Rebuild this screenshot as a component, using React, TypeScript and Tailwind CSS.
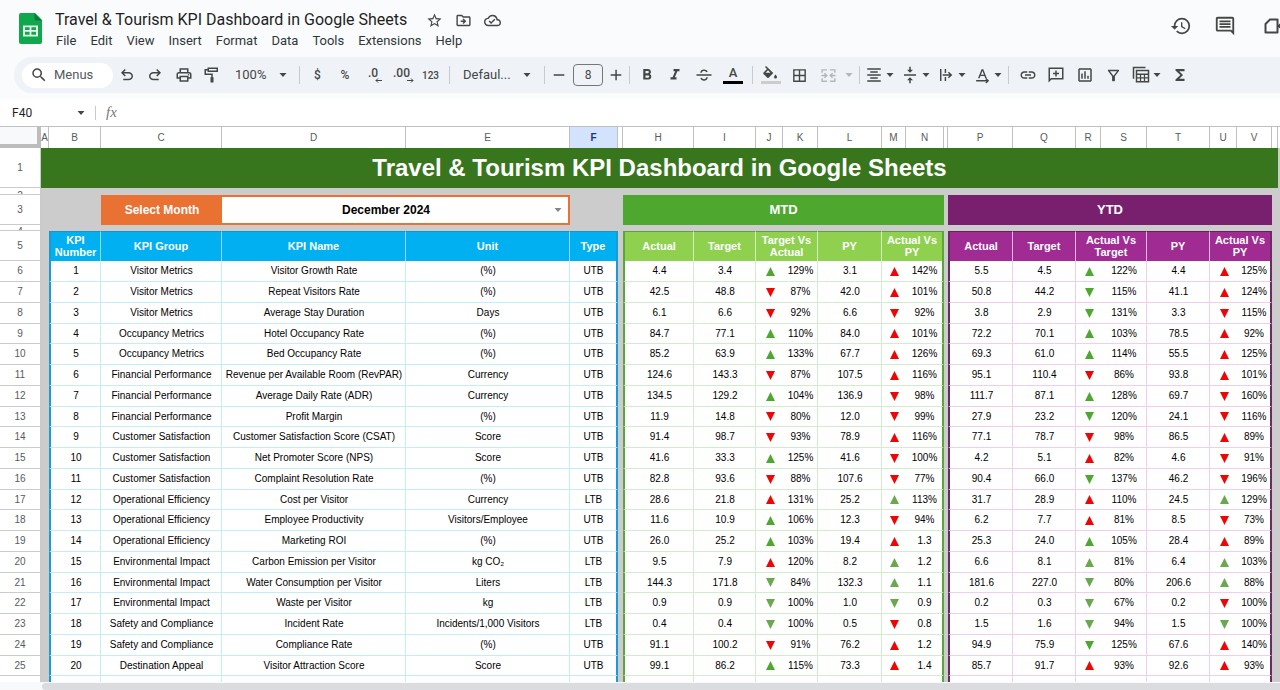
import type { ReactNode } from 'react';
import clsx from 'clsx';
import {
  MdBorderAll,
  MdFormatAlignCenter,
  MdFormatBold,
  MdFormatItalic,
  MdFunctions,
  MdHistory,
  MdLink,
  MdOutlineCloudDone,
  MdOutlineComment,
  MdOutlineDriveFileMove,
  MdOutlineFilterAlt,
  MdOutlineInsertChart,
  MdOutlinePrint,
  MdSearch,
  MdStarBorder,
  MdVerticalAlignCenter,
} from 'react-icons/md';

type Mark = 'up' | 'down' | 'upRed' | 'downRed';
type Period = [string, string, Mark, string, string, Mark, string];

interface Kpi {
  group: string;
  name: string;
  unit: string;
  type: 'UTB' | 'LTB';
  mtd: Period;
  ytd: Period;
}

const kpis: Kpi[] = [
  { group: 'Visitor Metrics', name: 'Visitor Growth Rate', unit: '(%)', type: 'UTB', mtd: ['4.4', '3.4', 'up', '129%', '3.1', 'upRed', '142%'], ytd: ['5.5', '4.5', 'up', '122%', '4.4', 'upRed', '125%'] },
  { group: 'Visitor Metrics', name: 'Repeat Visitors Rate', unit: '(%)', type: 'UTB', mtd: ['42.5', '48.8', 'downRed', '87%', '42.0', 'upRed', '101%'], ytd: ['50.8', '44.2', 'down', '115%', '41.1', 'upRed', '124%'] },
  { group: 'Visitor Metrics', name: 'Average Stay Duration', unit: 'Days', type: 'UTB', mtd: ['6.1', '6.6', 'downRed', '92%', '6.6', 'downRed', '92%'], ytd: ['3.8', '2.9', 'down', '131%', '3.3', 'downRed', '115%'] },
  { group: 'Occupancy Metrics', name: 'Hotel Occupancy Rate', unit: '(%)', type: 'UTB', mtd: ['84.7', '77.1', 'up', '110%', '84.0', 'upRed', '101%'], ytd: ['72.2', '70.1', 'up', '103%', '78.5', 'upRed', '92%'] },
  { group: 'Occupancy Metrics', name: 'Bed Occupancy Rate', unit: '(%)', type: 'UTB', mtd: ['85.2', '63.9', 'up', '133%', '67.7', 'upRed', '126%'], ytd: ['69.3', '61.0', 'up', '114%', '55.5', 'upRed', '125%'] },
  { group: 'Financial Performance', name: 'Revenue per Available Room (RevPAR)', unit: 'Currency', type: 'UTB', mtd: ['124.6', '143.3', 'downRed', '87%', '107.5', 'upRed', '116%'], ytd: ['95.1', '110.4', 'downRed', '86%', '93.8', 'upRed', '101%'] },
  { group: 'Financial Performance', name: 'Average Daily Rate (ADR)', unit: 'Currency', type: 'UTB', mtd: ['134.5', '129.2', 'up', '104%', '136.9', 'downRed', '98%'], ytd: ['111.7', '87.1', 'up', '128%', '69.7', 'downRed', '160%'] },
  { group: 'Financial Performance', name: 'Profit Margin', unit: '(%)', type: 'UTB', mtd: ['11.9', '14.8', 'downRed', '80%', '12.0', 'downRed', '99%'], ytd: ['27.9', '23.2', 'down', '120%', '24.1', 'downRed', '116%'] },
  { group: 'Customer Satisfaction', name: 'Customer Satisfaction Score (CSAT)', unit: 'Score', type: 'UTB', mtd: ['91.4', '98.7', 'downRed', '93%', '78.9', 'upRed', '116%'], ytd: ['77.1', '78.7', 'downRed', '98%', '86.5', 'upRed', '89%'] },
  { group: 'Customer Satisfaction', name: 'Net Promoter Score (NPS)', unit: 'Score', type: 'UTB', mtd: ['41.6', '33.3', 'up', '125%', '41.6', 'downRed', '100%'], ytd: ['4.2', '5.1', 'upRed', '82%', '4.6', 'downRed', '91%'] },
  { group: 'Customer Satisfaction', name: 'Complaint Resolution Rate', unit: '(%)', type: 'UTB', mtd: ['82.8', '93.6', 'downRed', '88%', '107.6', 'downRed', '77%'], ytd: ['90.4', '66.0', 'down', '137%', '46.2', 'downRed', '196%'] },
  { group: 'Operational Efficiency', name: 'Cost per Visitor', unit: 'Currency', type: 'LTB', mtd: ['28.6', '21.8', 'upRed', '131%', '25.2', 'up', '113%'], ytd: ['31.7', '28.9', 'upRed', '110%', '24.5', 'up', '129%'] },
  { group: 'Operational Efficiency', name: 'Employee Productivity', unit: 'Visitors/Employee', type: 'UTB', mtd: ['11.6', '10.9', 'up', '106%', '12.3', 'downRed', '94%'], ytd: ['6.2', '7.7', 'upRed', '81%', '8.5', 'downRed', '73%'] },
  { group: 'Operational Efficiency', name: 'Marketing ROI', unit: '(%)', type: 'UTB', mtd: ['26.0', '25.2', 'up', '103%', '19.4', 'upRed', '1.3'], ytd: ['25.3', '24.0', 'up', '105%', '28.4', 'upRed', '89%'] },
  { group: 'Environmental Impact', name: 'Carbon Emission per Visitor', unit: 'kg CO₂', type: 'LTB', mtd: ['9.5', '7.9', 'upRed', '120%', '8.2', 'up', '1.2'], ytd: ['6.6', '8.1', 'up', '81%', '6.4', 'up', '103%'] },
  { group: 'Environmental Impact', name: 'Water Consumption per Visitor', unit: 'Liters', type: 'LTB', mtd: ['144.3', '171.8', 'down', '84%', '132.3', 'up', '1.1'], ytd: ['181.6', '227.0', 'down', '80%', '206.6', 'up', '88%'] },
  { group: 'Environmental Impact', name: 'Waste per Visitor', unit: 'kg', type: 'LTB', mtd: ['0.9', '0.9', 'down', '100%', '1.0', 'down', '0.9'], ytd: ['0.2', '0.3', 'down', '67%', '0.2', 'downRed', '100%'] },
  { group: 'Safety and Compliance', name: 'Incident Rate', unit: 'Incidents/1,000 Visitors', type: 'LTB', mtd: ['0.4', '0.4', 'down', '100%', '0.5', 'downRed', '0.8'], ytd: ['1.5', '1.6', 'down', '94%', '1.5', 'down', '100%'] },
  { group: 'Safety and Compliance', name: 'Compliance Rate', unit: '(%)', type: 'UTB', mtd: ['91.1', '100.2', 'downRed', '91%', '76.2', 'upRed', '1.2'], ytd: ['94.9', '75.9', 'down', '125%', '67.6', 'upRed', '140%'] },
  { group: 'Destination Appeal', name: 'Visitor Attraction Score', unit: 'Score', type: 'UTB', mtd: ['99.1', '86.2', 'up', '115%', '73.3', 'upRed', '1.4'], ytd: ['85.7', '91.7', 'upRed', '93%', '92.6', 'upRed', '93%'] },
];

const columns = [
  { letter: 'A', width: 'w-2' },
  { letter: 'B', width: 'w-[52px]' },
  { letter: 'C', width: 'w-[121px]' },
  { letter: 'D', width: 'w-[184px]' },
  { letter: 'E', width: 'w-[164px]' },
  { letter: 'F', width: 'w-12' },
  { letter: '', width: 'w-[5px]' },
  { letter: 'H', width: 'w-[71px]' },
  { letter: 'I', width: 'w-[62px]' },
  { letter: 'J', width: 'w-[27px]' },
  { letter: 'K', width: 'w-[35px]' },
  { letter: 'L', width: 'w-16' },
  { letter: 'M', width: 'w-6' },
  { letter: 'N', width: 'w-[38px]' },
  { letter: '', width: 'w-1' },
  { letter: 'P', width: 'w-[65px]' },
  { letter: 'Q', width: 'w-[63px]' },
  { letter: 'R', width: 'w-[25px]' },
  { letter: 'S', width: 'w-[46px]' },
  { letter: 'T', width: 'w-[63px]' },
  { letter: 'U', width: 'w-[27px]' },
  { letter: 'V', width: 'w-[35px]' },
  { letter: '', width: 'w-1.5' },
];

const menus = ['File', 'Edit', 'View', 'Insert', 'Format', 'Data', 'Tools', 'Extensions', 'Help'];

const themes = {
  kpi: { head: 'bg-[#00b0f0] border-[#8fdcf8] border-t-[#1795c4]', cell: 'border-[#c4edf8]', left: 'border-l-2 border-l-[#1b9bd0]', right: 'border-r-2 border-r-[#1b9bd0]' },
  mtd: { head: 'bg-[#8fd14f] border-[#d5efbb] border-t-[#5fa044]', cell: 'border-[#d0eecb]', left: 'border-l-2 border-l-[#5aa53e]', right: 'border-r-2 border-r-[#5aa53e]' },
  ytd: { head: 'bg-[#a02b93] border-[#e3b6de] border-t-[#64205b]', cell: 'border-[#f1cdf0]', left: 'border-l-2 border-l-[#6b2c62]', right: 'border-r-2 border-r-[#6b2c62]' },
};

const SheetsLogo = () => (
  <svg viewBox="0 0 23 31" className="h-[31px] w-[23px] shrink-0" aria-hidden="true">
    <path d="M2 0h14l7 7v22a2 2 0 0 1-2 2H2a2 2 0 0 1-2-2V2a2 2 0 0 1 2-2z" fill="#0fa84c" />
    <path d="M15.500 0L23 7.500h-5.500a2 2 0 0 1-2-2z" fill="#0b7d38" />
    <path d="M4 12.500h15v11H4zM6 14.300v2.700h4.600v-2.700zM12.400 14.300v2.700H17v-2.700zM6 18.800v2.900h4.600v-2.900zM12.400 18.800v2.900H17v-2.900z" fill="#e6f7ec" fillRule="evenodd" />
  </svg>
);

const Svg = ({ size = 18, children }: { size?: number; children: ReactNode }) => (
  <svg viewBox="0 0 24 24" width={size} height={size} fill="currentColor" aria-hidden="true">
    {children}
  </svg>
);

const Caret = ({ className = 'text-[#444746]' }: { className?: string }) => (
  <svg viewBox="0 0 8 4" className={clsx('h-1 w-2 shrink-0', className)} fill="currentColor" aria-hidden="true">
    <path d="M0.500 0h7L4 4z" />
  </svg>
);

const Triangle = ({ mark, type }: { mark: Mark; type: Kpi['type'] }) => {
  const red = mark === 'upRed' || mark === 'downRed';
  const up = mark === 'up' || mark === 'upRed';
  const color = red ? 'text-[#f00505]' : type === 'UTB' ? 'text-[#4ea72e]' : 'text-[#6aa84f]';
  return (
    <svg viewBox="0 0 9 9" className={clsx('mx-auto block h-[9px] w-[9px]', color)} fill="currentColor" role="img" aria-label={up ? 'Up' : 'Down'}>
      <path d={up ? 'M4.500 0L9 9H0z' : 'M0 0h9L4.500 9z'} />
    </svg>
  );
};

interface ToolProps {
  label: string;
  width?: string;
  caret?: boolean;
  disabled?: boolean;
  children: ReactNode;
}

const Tool = ({ label, width = 'w-7', caret, disabled, children }: ToolProps) => (
  <button
    type="button"
    aria-label={label}
    disabled={disabled}
    className={clsx(
      'flex h-7 shrink-0 items-center justify-center rounded',
      caret ? 'w-8' : width,
      disabled ? 'text-[#b4b7ba]' : 'text-[#444746]',
    )}
  >
    {caret ? (
      <>
        <span className="flex w-5 justify-center">{children}</span>
        <span className="flex w-3 justify-center">
          <Caret className="text-current" />
        </span>
      </>
    ) : (
      children
    )}
  </button>
);

const Divider = () => <span className="mx-1 h-[18px] w-px shrink-0 bg-[#c7cbd0]" />;

const DecimalIcon = ({ text, back }: { text: string; back?: boolean }) => (
  <span className="flex flex-col text-[12px] leading-[10px] font-medium">
    {text}
    <svg viewBox="0 0 7 5" className="-mr-1 h-[5px] w-[7px] self-end" fill="none" stroke="currentColor" aria-hidden="true">
      <path d={back ? 'M7 2.500H1M3 .5l-2 2 2 2' : 'M0 2.500h6M4 .5l2 2-2 2'} />
    </svg>
  </span>
);

const Header = () => (
  <header className="flex items-start justify-between overflow-hidden pt-[9px] pl-[19px]">
    <div className="flex gap-3">
      <div className="pt-1">
        <SheetsLogo />
      </div>
      <div>
        <div className="flex h-[22px] items-center text-[#444746]">
          <h1 className="pl-px text-[16px] leading-[22px] whitespace-nowrap text-[#1f1f1f]">
            Travel &amp; Tourism KPI Dashboard in Google Sheets
          </h1>
          <div className="ml-[19px] flex gap-3">
            <button type="button" aria-label="Star"><MdStarBorder size={17} /></button>
            <button type="button" aria-label="Move"><MdOutlineDriveFileMove size={17} /></button>
            <button type="button" aria-label="Document status"><MdOutlineCloudDone size={17} /></button>
          </div>
        </div>
        <nav className="flex h-5 items-center gap-3.5 pl-0.5 text-[13px] leading-5 text-[#333638]">
          {menus.map((menu) => (
            <button key={menu} type="button">{menu}</button>
          ))}
        </nav>
      </div>
    </div>
    <div className="-mr-1 flex h-[34px] items-center gap-[22px] text-[#444746]">
      <button type="button" aria-label="Version history"><MdHistory size={22} /></button>
      <button type="button" aria-label="Comments"><MdOutlineComment size={22} /></button>
      <button type="button" aria-label="Join a call" className="ml-1.5">
        <svg viewBox="0 0 20 16" className="h-4 w-5" fill="none" stroke="currentColor" strokeWidth="2" aria-hidden="true">
          <path d="M6 1.500h7.500v13H1.500V6z" strokeLinejoin="round" />
          <path d="M13.500 7.500L19 3v10l-5.500-4.500z" fill="currentColor" strokeWidth="0" />
        </svg>
      </button>
    </div>
  </header>
);

const Toolbar = () => (
  <div role="toolbar" aria-label="Main toolbar" className="mt-[6px] ml-3.5 flex h-9 items-center overflow-hidden rounded-l-full bg-[#eff3f8] pl-2 text-[13px] text-[#444746]">
    <label className="flex h-[25px] w-[91px] shrink-0 items-center rounded-full bg-white pl-2">
      <MdSearch size={18} className="shrink-0" />
      <input type="text" aria-label="Search the menus" placeholder="Menus" className="ml-1.5 w-14 bg-transparent outline-none placeholder:text-[#54585b]" />
    </label>
    <Tool label="Undo">
      <Svg><path d="M7 19v-2h7.100q1.575 0 2.738-1T18 13.500 16.838 11 14.100 10H7.800l2.600 2.600L9 14 4 9l5-5 1.400 1.400L7.800 8h6.300q2.425 0 4.163 1.575T20 13.500t-1.737 3.925T14.100 19z" /></Svg>
    </Tool>
    <Tool label="Redo">
      <Svg><path d="M17 19v-2H9.900q-1.575 0-2.738-1T6 13.500 7.162 11 9.900 10h6.300l-2.600 2.600L15 14l5-5-5-5-1.400 1.400L16.200 8H9.900Q7.475 8 5.737 9.575T4 13.500t1.737 3.925T9.900 19z" /></Svg>
    </Tool>
    <Tool label="Print" width="w-[29px]"><MdOutlinePrint size={18} /></Tool>
    <Tool label="Paint format">
      <Svg><path d="M6 2h14v6H6V6H4v4h9v5h1v7h-4v-7h1v-3H2V4h4zm2 2v2h10V4z" fillRule="evenodd" /></Svg>
    </Tool>
    <span className="relative flex w-[69px] shrink-0 items-center">
      <select aria-label="Zoom" className="w-full appearance-none pl-[9px] outline-none">
        <option>100%</option>
      </select>
      <Caret className="pointer-events-none absolute right-2" />
    </span>
    <Divider />
    <Tool label="Format as currency" width="w-[27px]"><span className="text-[12px] font-medium">$</span></Tool>
    <Tool label="Format as percent"><span className="text-[12px] font-medium">%</span></Tool>
    <Tool label="Decrease decimal places"><DecimalIcon text=".0" back /></Tool>
    <Tool label="Increase decimal places" width="w-[29px]"><DecimalIcon text=".00" /></Tool>
    <Tool label="More formats" width="w-[29px]"><span className="text-[10px] font-medium">123</span></Tool>
    <Divider />
    <span className="relative flex w-[86px] shrink-0 items-center">
      <select aria-label="Font" className="w-full appearance-none pl-[9px] outline-none">
        <option>Defaul...</option>
      </select>
      <Caret className="pointer-events-none absolute right-[9px]" />
    </span>
    <Divider />
    <Tool label="Decrease font size" width="w-5">
      <Svg size={16}><path d="M4 11h16v2.200H4z" /></Svg>
    </Tool>
    <input type="text" aria-label="Font size" defaultValue="8" className="mx-1 h-[22px] w-[30px] shrink-0 rounded border border-[#747775] bg-transparent text-center text-[12px] outline-none" />
    <Tool label="Increase font size" width="w-[18px]">
      <Svg size={16}><path d="M11 4h2.200v7H20v2.200h-6.800V20H11v-6.800H4V11h7z" /></Svg>
    </Tool>
    <Divider />
    <Tool label="Bold" width="w-[26px]"><MdFormatBold size={18} /></Tool>
    <Tool label="Italic" width="w-[29px]"><MdFormatItalic size={18} /></Tool>
    <Tool label="Strikethrough" width="w-[29px]">
      <Svg><path d="M2 11h20v2H2zM7 9c0-3 2.200-4.500 5-4.500 2.400 0 4.200 1 4.900 3.100l-2 .8C14.500 7.200 13.500 6.500 12 6.500c-1.700 0-2.900.8-2.900 2.500zM17 15c0 3-2.200 4.500-5 4.500-2.400 0-4.200-1-4.900-3.100l2-.8c.4 1.200 1.400 1.900 2.900 1.900 1.700 0 2.900-.8 2.900-2.500z" /></Svg>
    </Tool>
    <Tool label="Text color" width="w-[30px]">
      <span className="flex flex-col items-center text-[13px] leading-3 font-medium">
        A
        <span className="mt-0.5 h-[3px] w-5 bg-black" />
      </span>
    </Tool>
    <Divider />
    <Tool label="Fill color">
      <svg viewBox="0 0 20 18" className="h-[18px] w-5" aria-hidden="true">
        <path d="M5 0l-1 1 2 2-3.500 3.500a1 1 0 0 0 0 1.400l3.800 3.800a1 1 0 0 0 1.400 0l4.600-4.600zM7 4.300l2.500 2.500h-5zM14.500 8.500s-1.500 1.600-1.500 2.500a1.500 1.500 0 0 0 3 0c0-.9-1.500-2.500-1.500-2.500z" fill="#444746" fillRule="evenodd" />
        <path d="M0 15h20v3H0z" fill="#cccccc" />
      </svg>
    </Tool>
    <Tool label="Borders" width="w-[29px]"><MdBorderAll size={17} /></Tool>
    <span className="flex">
      <Tool label="Merge cells" width="w-[29px]" disabled>
        <Svg size={17}><path d="M2 3h8v2H4v3H2zM14 3h8v5h-2V5h-6zM2 16h2v3h6v2H2zM20 16h2v5h-8v-2h6zM2 11h5L5.500 9.500 7 8l4 4-4 4-1.500-1.500L7 13H2zM22 11h-5l1.500-1.500L17 8l-4 4 4 4 1.500-1.500L17 13h5z" /></Svg>
      </Tool>
      <button type="button" aria-label="Merge type" disabled className="flex w-3 items-center justify-center">
        <Caret className="text-[#b4b7ba]" />
      </button>
    </span>
    <Divider />
    <span className="flex gap-1">
      <Tool label="Horizontal align" caret><MdFormatAlignCenter size={18} /></Tool>
      <Tool label="Vertical align" caret><MdVerticalAlignCenter size={18} /></Tool>
      <Tool label="Text wrapping" caret>
        <Svg size={16}><path d="M3 3h2.200v18H3zM10 3h2.200v6H10zM10 15h2.200v6H10zM7 11h10.200l-2.400-2.400L16.300 7l5.200 5-5.200 5-1.500-1.600 2.400-2.400H7z" /></Svg>
      </Tool>
      <Tool label="Text rotation" caret>
        <Svg size={17}><path d="M10.700 3h2.400l5 13h-2.200l-1.200-3.200H9.100L7.900 16H5.700zM9.800 11h4.200l-2.100-5.800zM3 18.500h14.500L16 17l1.400-1.400 4 3.900-4 3.900L16 22l1.500-1.500H3z" /></Svg>
      </Tool>
    </span>
    <Divider />
    <Tool label="Insert link" width="w-[29px]"><MdLink size={18} /></Tool>
    <Tool label="Insert comment">
      <Svg><path d="M2 2h20v16H6l-4 4zm2 2v13.200L5.200 16H20V4zM11 6h2v3h3v2h-3v3h-2v-3H8V9h3z" fillRule="evenodd" /></Svg>
    </Tool>
    <Tool label="Insert chart" width="w-[29px]"><MdOutlineInsertChart size={18} /></Tool>
    <Tool label="Create a filter"><MdOutlineFilterAlt size={17} /></Tool>
    <span className="mx-1 flex">
      <Tool label="Filter views" caret>
        <Svg><path d="M1 1h17v2H3v14H1zM5 5h18v17H5zm2 2v3h14V7zm0 5v3h3.500v-3zm5.200 0v3h3.600v-3zm5.300 0v3H21v-3zM7 16.800V20h3.500v-3.200zm5.200 0V20h3.600v-3.200zm5.300 0V20H21v-3.200z" fillRule="evenodd" /></Svg>
      </Tool>
    </span>
    <Tool label="Functions" width="w-[26px]"><MdFunctions size={18} /></Tool>
  </div>
);

const FormulaBar = () => (
  <div className="mt-1.5 flex h-[27px] items-center bg-white">
    <label className="flex w-[95px] items-center pl-3">
      <input type="text" aria-label="Name box" defaultValue="F40" className="w-[65px] text-[12px] text-[#1f1f1f] outline-none" />
      <Caret />
    </label>
    <span className="h-[14px] w-px bg-[#c7cbd0]" />
    <span className="w-6 pl-2.5 font-['Liberation_Serif',serif] text-[15px] text-[#777a7d] italic">fx</span>
    <input type="text" aria-label="Formula" className="ml-1 min-w-0 flex-1 outline-none" />
  </div>
);

const RowNumber = ({ n }: { n: number }) => (
  <th scope="row" className="overflow-hidden border-r border-b border-[#c9cbcd] bg-white p-0 text-center font-normal text-[#575b5f]">
    {n}
  </th>
);

// Rows 2 and 4 are thin spacers, so their numbers are cut off by the row.
const SpacerRow = ({ n, height }: { n: number; height: string }) => (
  <tr className={height}>
    <th scope="row" className="border-r border-b border-[#c9cbcd] bg-white p-0 font-normal text-[#575b5f]">
      <div className="h-[5px] overflow-hidden leading-[14px]">{n}</div>
    </th>
    <td colSpan={24} className="p-0" />
  </tr>
);

const HeadCell = ({ theme, span, edge, children }: { theme: keyof typeof themes; span?: number; edge?: 'left' | 'right'; children: ReactNode }) => (
  <th
    scope="col"
    colSpan={span}
    className={clsx('border-t border-r p-0 pb-0.5 text-center text-[11px] leading-3 font-bold text-white', themes[theme].head, edge && themes[theme][edge])}
  >
    {children}
  </th>
);

const Cell = ({ theme, edge, bare, children }: { theme: keyof typeof themes; edge?: 'left' | 'right'; bare?: boolean; children?: ReactNode }) => (
  <td
    className={clsx('border-b bg-white p-0 pl-px text-center whitespace-nowrap text-black', !bare && 'border-r', themes[theme].cell, edge && themes[theme][edge])}
  >
    {children}
  </td>
);

const PeriodCells = ({ theme, values, type }: { theme: 'mtd' | 'ytd'; values: Period; type: Kpi['type'] }) => {
  const [actual, target, targetMark, targetPct, py, pyMark, pyPct] = values;
  return (
    <>
      <Cell theme={theme} edge="left">{actual}</Cell>
      <Cell theme={theme}>{target}</Cell>
      <Cell theme={theme} bare><Triangle mark={targetMark} type={type} /></Cell>
      <Cell theme={theme}>{targetPct}</Cell>
      <Cell theme={theme}>{py}</Cell>
      <Cell theme={theme} bare><Triangle mark={pyMark} type={type} /></Cell>
      <Cell theme={theme} edge="right">{pyPct}</Cell>
    </>
  );
};

const Sheet = () => (
  <main className="min-h-0 flex-1 overflow-hidden">
    <table className="w-full table-fixed border-separate border-spacing-0 bg-[#cccccc] font-['Liberation_Sans',Arial,sans-serif] text-[10px] leading-4">
      <colgroup>
        <col className="w-[41px]" />
        {columns.map((col, i) => (
          <col key={i} className={col.width} />
        ))}
        <col />
      </colgroup>
      <thead>
        <tr className="h-[22px]">
          <td className="border-t border-r-4 border-b-4 border-t-[#c0c0c0] border-r-[#bdbdbd] border-b-[#bdbdbd] bg-[#f8f9fa] p-0" />
          {columns.map((col, i) => (
            <th
              key={i}
              scope="col"
              className={clsx(
                'border-t border-r border-[#c0c0c0] p-0 text-center',
                col.letter === 'F' ? 'bg-[#d3e3fd] font-bold text-[#1b3a6b]' : 'bg-white font-normal text-[#575b5f]',
              )}
            >
              {col.letter}
            </th>
          ))}
          <td className="border-t border-[#c0c0c0] bg-white p-0" />
        </tr>
      </thead>
      <tbody>
        <tr className="h-10">
          <RowNumber n={1} />
          <td colSpan={23} className="bg-[#38761d] p-0 text-center text-[24px] leading-8 font-bold text-white">
            Travel &amp; Tourism KPI Dashboard in Google Sheets
          </td>
          <td className="p-0" />
        </tr>
        <SpacerRow n={2} height="h-[7px]" />
        <tr className="h-[30px]">
          <RowNumber n={3} />
          <td colSpan={2} className="p-0" />
          <td className="bg-[#e97132] p-0 pl-px text-center text-[12px] font-bold text-white">
            <label htmlFor="month">Select Month</label>
          </td>
          <td colSpan={2} className="border-2 border-l-0 border-[#e97132] bg-white p-0">
            <div className="relative flex items-center">
              <select id="month" className="w-full appearance-none pr-[18px] text-center text-[12px] leading-5 font-bold text-black outline-none [text-align-last:center]">
                <option>December 2024</option>
              </select>
              <Caret className="pointer-events-none absolute right-1.5 text-[#80868b]" />
            </div>
          </td>
          <td colSpan={2} className="p-0" />
          <td colSpan={7} className="bg-[#4ea72e] p-0 text-center text-[13px] font-bold text-white">MTD</td>
          <td className="p-0" />
          <td colSpan={7} className="bg-[#78206e] p-0 text-center text-[13px] font-bold text-white">YTD</td>
          <td colSpan={2} className="p-0" />
        </tr>
        <SpacerRow n={4} height="h-1.5" />
        <tr className="h-[30px]">
          <RowNumber n={5} />
          <td className="p-0" />
          <HeadCell theme="kpi" edge="left">KPI Number</HeadCell>
          <HeadCell theme="kpi">KPI Group</HeadCell>
          <HeadCell theme="kpi">KPI Name</HeadCell>
          <HeadCell theme="kpi">Unit</HeadCell>
          <HeadCell theme="kpi" edge="right">Type</HeadCell>
          <td className="p-0" />
          <HeadCell theme="mtd" edge="left">Actual</HeadCell>
          <HeadCell theme="mtd">Target</HeadCell>
          <HeadCell theme="mtd" span={2}>Target Vs<br />Actual</HeadCell>
          <HeadCell theme="mtd">PY</HeadCell>
          <HeadCell theme="mtd" span={2} edge="right">Actual Vs<br />PY</HeadCell>
          <td className="p-0" />
          <HeadCell theme="ytd" edge="left">Actual</HeadCell>
          <HeadCell theme="ytd">Target</HeadCell>
          <HeadCell theme="ytd" span={2}>Actual Vs<br />Target</HeadCell>
          <HeadCell theme="ytd">PY</HeadCell>
          <HeadCell theme="ytd" span={2} edge="right">Actual Vs<br />PY</HeadCell>
          <td colSpan={2} className="p-0" />
        </tr>
        {kpis.map((kpi, i) => (
          <tr key={kpi.name} className={i % 4 === 3 ? 'h-5' : 'h-[21px]'}>
            <RowNumber n={i + 6} />
            <td className="p-0" />
            <Cell theme="kpi" edge="left">{i + 1}</Cell>
            <Cell theme="kpi">{kpi.group}</Cell>
            <Cell theme="kpi">{kpi.name}</Cell>
            <Cell theme="kpi">{kpi.unit}</Cell>
            <Cell theme="kpi" edge="right">{kpi.type}</Cell>
            <td className="p-0" />
            <PeriodCells theme="mtd" values={kpi.mtd} type={kpi.type} />
            <td className="p-0" />
            <PeriodCells theme="ytd" values={kpi.ytd} type={kpi.type} />
            <td colSpan={2} className="p-0" />
          </tr>
        ))}
        <tr className="h-[21px]">
          <th className="border-r border-b border-[#c9cbcd] bg-white p-0" />
          <td className="p-0" />
          <Cell theme="kpi" edge="left" />
          <Cell theme="kpi" />
          <Cell theme="kpi" />
          <Cell theme="kpi" />
          <Cell theme="kpi" edge="right" />
          <td className="p-0" />
          <PeriodCells theme="mtd" values={['', '', 'up', '', '', 'downRed', '']} type="UTB" />
          <td className="p-0" />
          <PeriodCells theme="ytd" values={['', '', 'up', '', '', 'downRed', '']} type="UTB" />
          <td colSpan={2} className="p-0" />
        </tr>
      </tbody>
    </table>
  </main>
);

const App = () => {
  return (
    <div className="flex h-screen flex-col overflow-hidden bg-[#f9fbfd] font-[Roboto,Arial,sans-serif]">
      <Header />
      <Toolbar />
      <FormulaBar />
      <Sheet />
      {/* Horizontal scroll bar */}
      <div className="flex h-2 bg-[#f8f9fa] pt-px pl-[42px]">
        <div className="flex-1 rounded-l-full bg-[#dadce0]" />
      </div>
    </div>
  );
};

export default App;
